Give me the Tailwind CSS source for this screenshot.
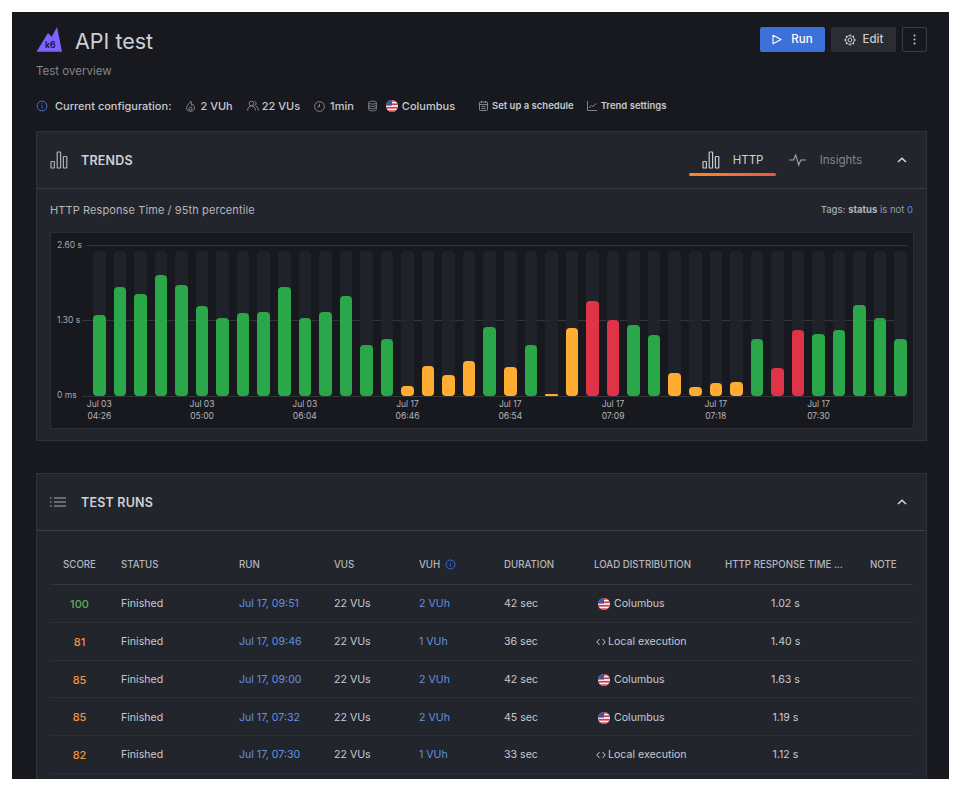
<!doctype html>
<html>
<head>
<meta charset="utf-8">
<title>API test</title>
<script src="https://cdn.jsdelivr.net/npm/@tailwindcss/browser@4"></script>
</head>
<body class="bg-white font-['Inter',sans-serif]">
<svg class="absolute h-0 w-0" width="0" height="0">
  <defs>
    <clipPath id="fc"><circle cx="6" cy="6" r="6"/></clipPath>
    <symbol id="flag" viewBox="0 0 12 12">
      <g clip-path="url(#fc)">
        <rect width="12" height="12" fill="#f5f5f5"/>
        <rect y="0" width="12" height="1.7" fill="#d8394a"/>
        <rect y="3.4" width="12" height="1.7" fill="#d8394a"/>
        <rect y="6.9" width="12" height="1.7" fill="#d8394a"/>
        <rect y="10.3" width="12" height="1.7" fill="#d8394a"/>
        <rect width="6" height="5.6" fill="#3c55a5"/>
      </g>
    </symbol>
    <symbol id="bars" viewBox="0 0 18 18" fill="none" stroke="currentColor" stroke-width="1.2">
      <rect x="1" y="10.5" width="3.4" height="6.5" rx=".6"/>
      <rect x="7.2" y="1" width="3.4" height="16" rx=".6"/>
      <rect x="13.4" y="5.5" width="3.4" height="11.5" rx=".6"/>
    </symbol>
    <symbol id="info" viewBox="0 0 12 12" fill="none" stroke="currentColor" stroke-width="1">
      <circle cx="6" cy="6" r="4.9"/>
      <path d="M6 5.4v3M6 3.4v.9"/>
    </symbol>
  </defs>
</svg>

<div class="ml-3 mt-3 h-[767px] w-[937px] overflow-hidden bg-[#18191e] pl-6 pr-[22px] pt-[15px] text-[#c8c9cf]">

  <!-- Title row -->
  <div class="flex h-[25px] items-center justify-between">
    <div class="flex items-center gap-[13px]">
      <svg class="h-[25px] w-[26px]" viewBox="0 0 26 25">
        <path d="M.5 24.700 L12 6 L15.700 9.700 L21 0 L26 24.700 Z" fill="#7d64ff"/>
        <text x="9" y="21.300" font-size="8.500" font-weight="700" fill="#1d1a35" font-family="Inter">k6</text>
      </svg>
      <h1 class="pt-1 text-[21.5px] leading-none font-normal text-[#cfd0d6]">API test</h1>
    </div>
    <div class="flex items-center gap-[6px]">
      <button class="flex h-[25px] w-[65px] items-center justify-center gap-[9px] rounded-[2px] bg-[#3d71d9] text-[11.5px] font-medium text-white">
        <svg class="h-[11px] w-[10px]" viewBox="0 0 10 11" fill="none" stroke="currentColor" stroke-width="1.1" stroke-linejoin="round"><path d="M1 1.200 L9 5.500 L1 9.800 Z"/></svg>
        Run
      </button>
      <button class="flex h-[25px] w-[65px] items-center justify-center gap-[7px] rounded-[2px] bg-[#2c2d33] text-[11.5px] font-medium text-[#c8c9cf]">
        <svg class="h-[12px] w-[12px]" viewBox="0 0 12 12" fill="none" stroke="currentColor"><circle cx="6" cy="6" r="1.900" stroke-width="1"/><circle cx="6" cy="6" r="4.300" stroke-width="1"/><path stroke-width="1.300" d="M6 .4v1.400M6 10.200v1.400M.4 6h1.400M10.200 6h1.400M2 2l1 1M9 9l1 1M2 10l1-1M9 3l1-1"/></svg>
        Edit
      </button>
      <button class="flex h-[25px] w-[25px] items-center justify-center rounded-[2px] border border-[#3b3d44]">
        <svg class="h-[11px] w-[3px]" viewBox="0 0 3 11" fill="#c8c9cf"><circle cx="1.500" cy="1.500" r="1"/><circle cx="1.500" cy="5.500" r="1"/><circle cx="1.500" cy="9.500" r="1"/></svg>
      </button>
    </div>
  </div>

  <p class="mt-[11px] h-4 text-[11.5px] leading-4 text-[#83848a]">Test overview</p>

  <!-- Config row -->
  <div class="mt-[15px] flex h-[22px] items-center pt-[2px] text-[11px] font-medium text-[#c8c9cf]">
    <svg class="h-[12px] w-[12px] text-[#3d71d9]"><use href="#info"/></svg>
    <span class="ml-[7px]">Current configuration:</span>
    <svg class="ml-[14px] h-[12px] w-[11px] text-[#8e8f96]" viewBox="0 0 11 12" fill="none" stroke="currentColor" stroke-width=".9"><path d="M5.500 1c.4 2-3.500 3.500-4 6.500C1.200 9.800 3.200 11.300 5.500 11.300s4.300-1.500 4-3.800C9.300 6 8.300 5 7.800 4.200 7.500 5 7 5.500 6.500 5.500 6.800 4 6.500 2 5.500 1z"/><circle cx="5.500" cy="8.700" r="1.500"/></svg>
    <span class="ml-[4px]">2 VUh</span>
    <svg class="ml-[14px] h-[12px] w-[12px] text-[#8e8f96]" viewBox="0 0 12 12" fill="none" stroke="currentColor" stroke-width=".9"><circle cx="4.500" cy="3.500" r="2.300"/><path d="M.6 10.500c0-3 1.700-4.500 3.900-4.500s3.900 1.500 3.900 4.500M7.500 1.300a2.300 2.300 0 0 1 0 4.400M9 6.300c1.500.5 2.400 2 2.400 4.200"/></svg>
    <span class="ml-[3px]">22 VUs</span>
    <svg class="ml-[14px] h-[11px] w-[11px] text-[#8e8f96]" viewBox="0 0 11 11" fill="none" stroke="currentColor" stroke-width=".9"><circle cx="5.500" cy="5.500" r="4.900"/><path d="M5.500 2.800v2.900H3.300"/></svg>
    <span class="ml-[5px]">1min</span>
    <svg class="ml-[14px] h-[12px] w-[9px] text-[#8e8f96]" viewBox="0 0 10 12" fill="none" stroke="currentColor" stroke-width=".9"><ellipse cx="5" cy="2.200" rx="4.300" ry="1.700"/><path d="M.7 2.200v7.600c0 .9 1.900 1.700 4.300 1.700s4.300-.8 4.300-1.700V2.200M.7 4.800c0 .9 1.900 1.700 4.300 1.700s4.300-.8 4.300-1.700M.7 7.400c0 .9 1.900 1.700 4.300 1.700s4.300-.8 4.300-1.700"/></svg>
    <svg class="ml-[9px] h-[12px] w-[12px]"><use href="#flag"/></svg>
    <span class="ml-[4px]">Columbus</span>
    <span class="ml-[24px] flex items-center gap-[4px] text-[9.5px] font-semibold">
      <svg class="h-[10px] w-[9px] text-[#8e8f96]" viewBox="0 0 9 10" fill="none" stroke="currentColor" stroke-width=".9"><rect x=".5" y="1" width="8" height="8.500" rx=".8"/><path d="M.5 3.500h8M2.500 0v2M6.500 0v2M2.500 5.500h4M2.500 7.500h4"/></svg>
      Set up a schedule
    </span>
    <span class="ml-[13px] flex items-center gap-[4px] text-[9.5px] font-semibold">
      <svg class="h-[10px] w-[10px] text-[#8e8f96]" viewBox="0 0 10 10" fill="none" stroke="currentColor" stroke-width=".9"><path d="M.5 0v9.500H10M2 7l2.300-2.500 1.700 1L9.500 2.500"/></svg>
      Trend settings
    </span>
  </div>

  <!-- Trends panel -->
  <section class="mt-[15px] h-[310px] border border-[#2f323a] bg-[#22252c]">
    <header class="flex h-[57px] items-center border-b border-[#3a3d45] px-[13px]">
      <svg class="h-[18px] w-[18px] text-[#b0b1b8]"><use href="#bars"/></svg>
      <h2 class="ml-[13px] pt-[2px] text-[12.5px] font-semibold tracking-[.2px] text-[#cfd0d6]">TRENDS</h2>
      <div class="ml-auto flex h-full items-center">
        <div class="relative flex h-full w-[87px] items-center pl-[13px]">
          <svg class="h-[18px] w-[18px] text-[#c8c9cf]"><use href="#bars"/></svg>
          <span class="ml-[13px] pt-[2px] text-[11.5px] text-[#cfd0d6]">HTTP</span>
          <div class="absolute bottom-[12px] left-0 h-[3px] w-[87px] rounded-sm bg-gradient-to-r from-[#f78a2c] to-[#f0553c]"></div>
        </div>
        <svg class="ml-[13px] h-[14px] w-[17px] text-[#a5a6ad]" viewBox="0 0 17 14" fill="none" stroke="currentColor" stroke-width="1.100"><path d="M0 7h4.500l2.200-5 3 10 2-5H17"/></svg>
        <span class="ml-[14px] pt-[2px] text-[11.5px] text-[#85868d]">Insights</span>
        <svg class="ml-[35px] mr-[6px] h-[6px] w-[10px] text-[#d8d9de]" viewBox="0 0 10 6" fill="none" stroke="currentColor" stroke-width="1.500"><path d="M1 5l4-3.800L9 5"/></svg>
      </div>
    </header>
    <div class="px-[13px]">
      <div class="flex h-[43px] items-center justify-between">
        <span class="text-[11px] tracking-[.1px] text-[#b4b5bb]">HTTP Response Time / 95th percentile</span>
        <span class="text-[9.5px] text-[#9a9ba1]"><span class="font-medium text-[#a9aab0]">Tags:</span> <span class="font-bold text-[#b4b5bb]">status</span> is not <span class="text-[#5c8ee6]">0</span></span>
      </div>
      <div class="relative h-[197px] w-[864px] border border-[#2b2e35] bg-[#18191e] pl-[42px] pr-[6px] pt-[18px]">
        <!-- axis overlays -->
        <span class="absolute left-[6px] top-[6px] text-[8.5px] leading-[12px] text-[#a5a6ad]">2.60 s</span>
        <span class="absolute left-[6px] top-[81px] text-[8.5px] leading-[12px] text-[#a5a6ad]">1.30 s</span>
        <span class="absolute left-[6px] top-[156px] text-[8.5px] leading-[12px] text-[#a5a6ad]">0 ms</span>
        <div class="absolute left-[36px] right-[6px] top-[12px] h-px bg-[#33353c]"></div>
        <div class="absolute left-[31px] right-[6px] top-[87px] h-px bg-[#33353c]"></div>
        <div class="absolute left-[31px] right-[6px] top-[163px] h-px bg-[#33353c]"></div>

        <div class="relative grid h-[145px] grid-cols-[repeat(40,minmax(0,1fr))] gap-x-2">
          <div class="flex items-end rounded-sm bg-[#20232a]/90"><div class="h-[81px] w-full rounded-sm bg-[#2aa748]"></div></div>
          <div class="flex items-end rounded-sm bg-[#20232a]/90"><div class="h-[109px] w-full rounded-sm bg-[#2aa748]"></div></div>
          <div class="flex items-end rounded-sm bg-[#20232a]/90"><div class="h-[102px] w-full rounded-sm bg-[#2aa748]"></div></div>
          <div class="flex items-end rounded-sm bg-[#20232a]/90"><div class="h-[121px] w-full rounded-sm bg-[#2aa748]"></div></div>
          <div class="flex items-end rounded-sm bg-[#20232a]/90"><div class="h-[111px] w-full rounded-sm bg-[#2aa748]"></div></div>
          <div class="flex items-end rounded-sm bg-[#20232a]/90"><div class="h-[90px] w-full rounded-sm bg-[#2aa748]"></div></div>
          <div class="flex items-end rounded-sm bg-[#20232a]/90"><div class="h-[78px] w-full rounded-sm bg-[#2aa748]"></div></div>
          <div class="flex items-end rounded-sm bg-[#20232a]/90"><div class="h-[83px] w-full rounded-sm bg-[#2aa748]"></div></div>
          <div class="flex items-end rounded-sm bg-[#20232a]/90"><div class="h-[84px] w-full rounded-sm bg-[#2aa748]"></div></div>
          <div class="flex items-end rounded-sm bg-[#20232a]/90"><div class="h-[109px] w-full rounded-sm bg-[#2aa748]"></div></div>
          <div class="flex items-end rounded-sm bg-[#20232a]/90"><div class="h-[78px] w-full rounded-sm bg-[#2aa748]"></div></div>
          <div class="flex items-end rounded-sm bg-[#20232a]/90"><div class="h-[84px] w-full rounded-sm bg-[#2aa748]"></div></div>
          <div class="flex items-end rounded-sm bg-[#20232a]/90"><div class="h-[100px] w-full rounded-sm bg-[#2aa748]"></div></div>
          <div class="flex items-end rounded-sm bg-[#20232a]/90"><div class="h-[51px] w-full rounded-sm bg-[#2aa748]"></div></div>
          <div class="flex items-end rounded-sm bg-[#20232a]/90"><div class="h-[57px] w-full rounded-sm bg-[#2aa748]"></div></div>
          <div class="flex items-end rounded-sm bg-[#20232a]/90"><div class="h-[10px] w-full rounded-sm bg-[#ffac33]"></div></div>
          <div class="flex items-end rounded-sm bg-[#20232a]/90"><div class="h-[30px] w-full rounded-sm bg-[#ffac33]"></div></div>
          <div class="flex items-end rounded-sm bg-[#20232a]/90"><div class="h-[21px] w-full rounded-sm bg-[#ffac33]"></div></div>
          <div class="flex items-end rounded-sm bg-[#20232a]/90"><div class="h-[35px] w-full rounded-sm bg-[#ffac33]"></div></div>
          <div class="flex items-end rounded-sm bg-[#20232a]/90"><div class="h-[69px] w-full rounded-sm bg-[#2aa748]"></div></div>
          <div class="flex items-end rounded-sm bg-[#20232a]/90"><div class="h-[29px] w-full rounded-sm bg-[#ffac33]"></div></div>
          <div class="flex items-end rounded-sm bg-[#20232a]/90"><div class="h-[51px] w-full rounded-sm bg-[#2aa748]"></div></div>
          <div class="flex items-end rounded-sm bg-[#20232a]/90"><div class="h-[2px] w-full rounded-sm bg-[#ffac33]"></div></div>
          <div class="flex items-end rounded-sm bg-[#20232a]/90"><div class="h-[68px] w-full rounded-sm bg-[#ffac33]"></div></div>
          <div class="flex items-end rounded-sm bg-[#20232a]/90"><div class="h-[95px] w-full rounded-sm bg-[#df3448]"></div></div>
          <div class="flex items-end rounded-sm bg-[#20232a]/90"><div class="h-[76px] w-full rounded-sm bg-[#df3448]"></div></div>
          <div class="flex items-end rounded-sm bg-[#20232a]/90"><div class="h-[71px] w-full rounded-sm bg-[#2aa748]"></div></div>
          <div class="flex items-end rounded-sm bg-[#20232a]/90"><div class="h-[61px] w-full rounded-sm bg-[#2aa748]"></div></div>
          <div class="flex items-end rounded-sm bg-[#20232a]/90"><div class="h-[23px] w-full rounded-sm bg-[#ffac33]"></div></div>
          <div class="flex items-end rounded-sm bg-[#20232a]/90"><div class="h-[9px] w-full rounded-sm bg-[#ffac33]"></div></div>
          <div class="flex items-end rounded-sm bg-[#20232a]/90"><div class="h-[13px] w-full rounded-sm bg-[#ffac33]"></div></div>
          <div class="flex items-end rounded-sm bg-[#20232a]/90"><div class="h-[14px] w-full rounded-sm bg-[#ffac33]"></div></div>
          <div class="flex items-end rounded-sm bg-[#20232a]/90"><div class="h-[57px] w-full rounded-sm bg-[#2aa748]"></div></div>
          <div class="flex items-end rounded-sm bg-[#20232a]/90"><div class="h-[28px] w-full rounded-sm bg-[#df3448]"></div></div>
          <div class="flex items-end rounded-sm bg-[#20232a]/90"><div class="h-[66px] w-full rounded-sm bg-[#df3448]"></div></div>
          <div class="flex items-end rounded-sm bg-[#20232a]/90"><div class="h-[62px] w-full rounded-sm bg-[#2aa748]"></div></div>
          <div class="flex items-end rounded-sm bg-[#20232a]/90"><div class="h-[66px] w-full rounded-sm bg-[#2aa748]"></div></div>
          <div class="flex items-end rounded-sm bg-[#20232a]/90"><div class="h-[91px] w-full rounded-sm bg-[#2aa748]"></div></div>
          <div class="flex items-end rounded-sm bg-[#20232a]/90"><div class="h-[78px] w-full rounded-sm bg-[#2aa748]"></div></div>
          <div class="flex items-end rounded-sm bg-[#20232a]/90"><div class="h-[57px] w-full rounded-sm bg-[#2aa748]"></div></div>
        </div>

        <div class="mt-[2px] grid grid-cols-[repeat(40,minmax(0,1fr))] gap-x-2 text-center text-[8.5px] leading-[12px] text-[#b4b5bb]">
          <div class="col-start-1 row-start-1 flex flex-col items-center whitespace-nowrap"><span>Jul 03</span><span>04:26</span></div>
          <div class="col-start-6 row-start-1 flex flex-col items-center whitespace-nowrap"><span>Jul 03</span><span>05:00</span></div>
          <div class="col-start-11 row-start-1 flex flex-col items-center whitespace-nowrap"><span>Jul 03</span><span>06:04</span></div>
          <div class="col-start-16 row-start-1 flex flex-col items-center whitespace-nowrap"><span>Jul 17</span><span>06:46</span></div>
          <div class="col-start-21 row-start-1 flex flex-col items-center whitespace-nowrap"><span>Jul 17</span><span>06:54</span></div>
          <div class="col-start-26 row-start-1 flex flex-col items-center whitespace-nowrap"><span>Jul 17</span><span>07:09</span></div>
          <div class="col-start-31 row-start-1 flex flex-col items-center whitespace-nowrap"><span>Jul 17</span><span>07:18</span></div>
          <div class="col-start-36 row-start-1 flex flex-col items-center whitespace-nowrap"><span>Jul 17</span><span>07:30</span></div>
        </div>
      </div>
    </div>
  </section>

  <!-- Test runs panel -->
  <section class="mt-[32px] h-[340px] border border-[#2f323a] bg-[#22252c]">
    <header class="flex h-[57px] items-center border-b border-[#3a3d45] px-[13px]">
      <svg class="h-[10px] w-[16px] text-[#b0b1b8]" viewBox="0 0 16 10" fill="none" stroke="currentColor" stroke-width="1"><path d="M0 1h1.500M0 5h1.500M0 9h1.500M4 1h12M4 5h12M4 9h12"/></svg>
      <h2 class="ml-[15px] pt-[2px] text-[12.5px] font-semibold tracking-[.2px] text-[#cfd0d6]">TEST RUNS</h2>
      <svg class="ml-auto mr-[6px] h-[6px] w-[10px] text-[#d8d9de]" viewBox="0 0 10 6" fill="none" stroke="currentColor" stroke-width="1.500"><path d="M1 5l4-3.800L9 5"/></svg>
    </header>
    <div class="px-[13px] text-[10.6px] text-[#c8c9cf]">
      <div class="grid h-[54px] grid-cols-[59px_118px_95px_85px_85px_90px_131px_145px_56px] items-center border-b border-[#33363d] pt-[15px] text-[9.7px] font-medium text-[#b4b5bb]">
        <span class="text-center">SCORE</span>
        <span class="pl-3">STATUS</span>
        <span class="pl-3">RUN</span>
        <span class="pl-3">VUS</span>
        <span class="flex items-center gap-[5px] pl-3">VUH <svg class="h-[11px] w-[11px] text-[#3d71d9]"><use href="#info"/></svg></span>
        <span class="pl-3">DURATION</span>
        <span class="pl-3">LOAD DISTRIBUTION</span>
        <span class="whitespace-nowrap px-3">HTTP RESPONSE TIME ...</span>
        <span class="pl-3">NOTE</span>
      </div>

      <div class="grid h-[37.75px] grid-cols-[59px_118px_95px_85px_85px_90px_131px_145px_56px] items-center border-b border-[#2d3037] pt-[2px]">
        <span class="text-center text-[11px] font-medium text-[#62ad58]">100</span>
        <span class="pl-3">Finished</span>
        <span class="pl-3 text-[#6391e0]">Jul 17, 09:51</span>
        <span class="pl-3">22 VUs</span>
        <span class="pl-3 text-[#6391e0]">2 VUh</span>
        <span class="pl-3">42 sec</span>
        <span class="flex items-center gap-1 pl-[16px]"><svg class="h-3 w-3"><use href="#flag"/></svg>Columbus</span>
        <span class="px-3 text-center">1.02 s</span>
        <span></span>
      </div>
      <div class="grid h-[37.75px] grid-cols-[59px_118px_95px_85px_85px_90px_131px_145px_56px] items-center border-b border-[#2d3037] pt-[2px]">
        <span class="text-center text-[11px] font-medium text-[#f2933a]">81</span>
        <span class="pl-3">Finished</span>
        <span class="pl-3 text-[#6391e0]">Jul 17, 09:46</span>
        <span class="pl-3">22 VUs</span>
        <span class="pl-3 text-[#6391e0]">1 VUh</span>
        <span class="pl-3">36 sec</span>
        <span class="-mt-px flex items-center gap-[2px] pl-[14px]"><svg class="mt-px h-[8px] w-[10px]" viewBox="0 0 10 8" fill="none" stroke="currentColor" stroke-width="1"><path d="M3.500 1L.8 4l2.700 3M6.500 1l2.700 3-2.700 3"/></svg>Local execution</span>
        <span class="px-3 text-center">1.40 s</span>
        <span></span>
      </div>
      <div class="grid h-[37.75px] grid-cols-[59px_118px_95px_85px_85px_90px_131px_145px_56px] items-center border-b border-[#2d3037] pt-[2px]">
        <span class="text-center text-[11px] font-medium text-[#f2933a]">85</span>
        <span class="pl-3">Finished</span>
        <span class="pl-3 text-[#6391e0]">Jul 17, 09:00</span>
        <span class="pl-3">22 VUs</span>
        <span class="pl-3 text-[#6391e0]">2 VUh</span>
        <span class="pl-3">42 sec</span>
        <span class="flex items-center gap-1 pl-[16px]"><svg class="h-3 w-3"><use href="#flag"/></svg>Columbus</span>
        <span class="px-3 text-center">1.63 s</span>
        <span></span>
      </div>
      <div class="grid h-[37.75px] grid-cols-[59px_118px_95px_85px_85px_90px_131px_145px_56px] items-center border-b border-[#2d3037] pt-[2px]">
        <span class="text-center text-[11px] font-medium text-[#f2933a]">85</span>
        <span class="pl-3">Finished</span>
        <span class="pl-3 text-[#6391e0]">Jul 17, 07:32</span>
        <span class="pl-3">22 VUs</span>
        <span class="pl-3 text-[#6391e0]">2 VUh</span>
        <span class="pl-3">45 sec</span>
        <span class="flex items-center gap-1 pl-[16px]"><svg class="h-3 w-3"><use href="#flag"/></svg>Columbus</span>
        <span class="px-3 text-center">1.19 s</span>
        <span></span>
      </div>
      <div class="grid h-[37.75px] grid-cols-[59px_118px_95px_85px_85px_90px_131px_145px_56px] items-center border-b border-[#2d3037] pt-[2px]">
        <span class="text-center text-[11px] font-medium text-[#f2933a]">82</span>
        <span class="pl-3">Finished</span>
        <span class="pl-3 text-[#6391e0]">Jul 17, 07:30</span>
        <span class="pl-3">22 VUs</span>
        <span class="pl-3 text-[#6391e0]">1 VUh</span>
        <span class="pl-3">33 sec</span>
        <span class="-mt-px flex items-center gap-[2px] pl-[14px]"><svg class="mt-px h-[8px] w-[10px]" viewBox="0 0 10 8" fill="none" stroke="currentColor" stroke-width="1"><path d="M3.500 1L.8 4l2.700 3M6.500 1l2.700 3-2.700 3"/></svg>Local execution</span>
        <span class="px-3 text-center">1.12 s</span>
        <span></span>
      </div>
    </div>
  </section>
</div>
</body>
</html>
